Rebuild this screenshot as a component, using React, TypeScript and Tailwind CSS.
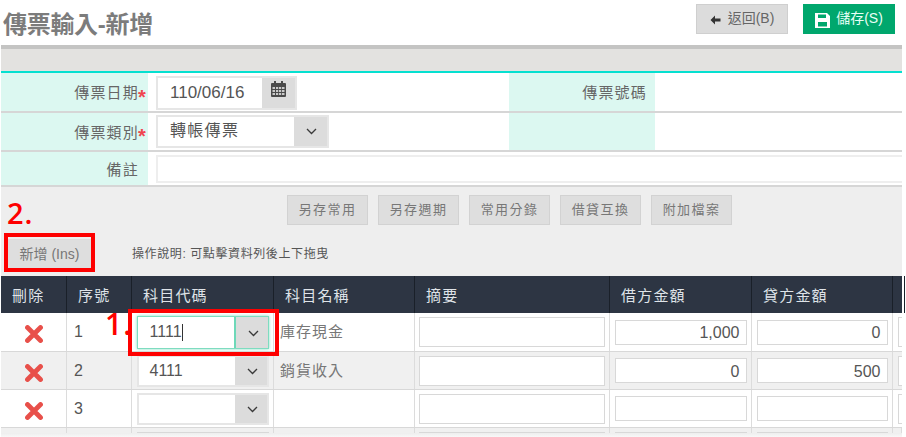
import React from "react";

const font = { fontFamily: '"Liberation Sans","Noto Sans CJK TC",sans-serif' };

function Chevron() {
  return (
    <svg width="11" height="7" viewBox="0 0 11 7" fill="none">
      <path d="M1 1l4.500 4.500L10 1" stroke="#3a3a3a" strokeWidth="1.300" />
    </svg>
  );
}

function Calendar() {
  return (
    <svg width="15" height="16" viewBox="0 0 15 16">
      <path d="M3 0h2v2h5V0h2v2h2a1 1 0 0 1 1 1v12a1 1 0 0 1-1 1H1a1 1 0 0 1-1-1V3a1 1 0 0 1 1-1h2z" fill="#4a4a4a" />
      <g fill="#c9c9c9">
        <rect x="1.500" y="6" width="2.500" height="2" />
        <rect x="5" y="6" width="2.200" height="2" />
        <rect x="8" y="6" width="2.200" height="2" />
        <rect x="11" y="6" width="2.500" height="2" />
        <rect x="1.500" y="9" width="2.500" height="2" />
        <rect x="5" y="9" width="2.200" height="2" />
        <rect x="8" y="9" width="2.200" height="2" />
        <rect x="11" y="9" width="2.500" height="2" />
        <rect x="1.500" y="12" width="2.500" height="2" />
        <rect x="5" y="12" width="2.200" height="2" />
        <rect x="8" y="12" width="2.200" height="2" />
        <rect x="11" y="12" width="2.500" height="2" />
      </g>
    </svg>
  );
}

function Cross() {
  return (
    <svg width="18" height="18" viewBox="0 0 18 18">
      <path d="M2.500 2.500l13 13M15.500 2.500l-13 13" stroke="#e8504a" strokeWidth="4.800" strokeLinecap="round" />
    </svg>
  );
}

function Label({ children, star }: { children: React.ReactNode; star?: boolean }) {
  return (
    <div className="w-[147px] shrink-0 bg-[#dcf8f1] flex items-center justify-end pt-[3px] text-[15px] tracking-[1.2px] text-[#666]">
      <span>{children}</span>
      <span className={star ? "w-[9px] text-[#f0454f] text-[20px] font-bold leading-none translate-y-[3px] -translate-x-[1px]" : "w-[9px]"}>{star ? "*" : ""}</span>
    </div>
  );
}

function ToolBtn({ children }: { children: React.ReactNode }) {
  return (
    <div className="w-[81px] h-[30px] bg-[#dedede] border border-[#d2d2d2] flex items-center justify-center text-[13px] tracking-[1.4px] text-[#777]">
      {children}
    </div>
  );
}

function Combo({ value, focused }: { value?: string; focused?: boolean }) {
  return (
    <div className={focused ? "flex h-[33px] w-[132px] border border-[#7fdcc0] shadow-[0_0_3px_#7fdcc0] bg-white" : "flex h-[32px] w-[132px] border-2 border-[#e6e6e6] bg-white"}>
      <div className={focused ? "flex-1 pl-[12px] flex items-center text-[16px] text-[#555] border-r-2 border-[#6ed8b8]" : "flex-1 pl-[11px] flex items-center text-[16px] text-[#555]"}>
        {value}
        {focused ? <span className="w-px h-[17px] bg-[#333]" /> : null}
      </div>
      <div className="w-[32px] bg-[#dcdcdc] flex items-center justify-center pl-[3px] pt-[2px]">
        <Chevron />
      </div>
    </div>
  );
}

function Amount({ value, w }: { value?: string; w: string }) {
  return (
    <div className={w + " h-[25px] border border-[#d8d8d8] bg-white flex items-center justify-end pr-[6px] pt-[2px] text-[16px] text-[#555]"}>
      {value}
    </div>
  );
}

const rowCols = "grid grid-cols-[66px_65px_142px_141px_195px_142px_141px_9px]";
const cell = "flex items-center border-r border-[#dcdcdc] min-w-0";

function Row({ n, code, name, d, c, alt, focused, h }: { n: string; code?: string; name?: string; d?: string; c?: string; alt?: boolean; focused?: boolean; h: string }) {
  return (
    <div className={rowCols + " " + h + " border-b border-[#d8d8d8] " + (alt ? "bg-[#f0f0f0]" : "bg-white")}>
      <div className={cell + " justify-center pt-[4px] border-[#cfcfcf]"}><Cross /></div>
      <div className={cell + " pl-[7px] text-[16px] text-[#555] border-[#cfcfcf]"}>{n}</div>
      <div className={cell + " justify-center"}><Combo value={code} focused={focused} /></div>
      <div className={cell + " pl-[6px] pt-[1px] text-[15px] tracking-[1px] text-[#777]"}>{name}</div>
      <div className={cell + " justify-center"}><div className="w-[186px] h-[30px] border border-[#d8d8d8] bg-white" /></div>
      <div className={cell + " justify-center"}><Amount value={d} w="w-[132px]" /></div>
      <div className={cell + " justify-center"}><Amount value={c} w="w-[131px]" /></div>
      <div className="flex items-center pl-[5px]"><div className="w-[4px] h-[30px] border border-[#d8d8d8] border-r-0 bg-white" /></div>
    </div>
  );
}

const heads = ["刪除", "序號", "科目代碼", "科目名稱", "摘要", "借方金額", "貸方金額", ""];
const lastCells = [0, 0, 132, 0, 186, 132, 131, 0];

export default function App() {
  return (
    <div className="relative w-[906px] h-[437px] overflow-hidden bg-white" style={font}>
      <div className="w-[901px] ml-[1px]">
        <div className="h-[45px] flex items-center justify-between pl-[2px] pr-[7px]">
          <div className="text-[24px] font-bold tracking-[-0.3px] text-[#7c7c7c] leading-none pt-[4px]">傳票輸入-新增</div>
          <div className="flex gap-[15px] pb-[8px]">
            <div className="w-[92px] h-[30px] bg-[#dcdcdc] border border-[#cfcfcf] flex items-center justify-center gap-[7px] text-[14px] text-[#666]">
              <svg width="11" height="10" viewBox="0 0 11 10" className="mt-[3px]"><path d="M5 0.500v3h5.500v3H5v3L0.500 5z" fill="#333" /></svg>
              <span>返回(B)</span>
            </div>
            <div className="w-[92px] h-[30px] bg-[#00a76d] flex items-center justify-center gap-[6px] text-[14px] text-[#e8fff6]">
              <svg width="15" height="15" viewBox="0 0 15 15" className="mt-[3px]"><path d="M0 0h12l3 3v12H0zM3 1.500v3.500h8V1.500zM3 9v4.500h9V9z" fill="#fff" fillRule="evenodd" /></svg>
              <span>儲存(S)</span>
            </div>
          </div>
        </div>
        <div className="h-[4px] bg-[#c4c4c3]" />
        <div className="h-[22px] bg-[#e3e2e0]" />
        <div className="h-[2px] bg-[#05e0d0]" />

        <div className="flex h-[40px] border-b-2 border-[#d6d6d6]">
          <Label star>傳票日期</Label>
          <div className="w-[361px] bg-white flex items-start pt-[3px] pl-[8px]">
            <div className="flex h-[34px] w-[141px] border-2 border-[#e6e6e6]">
              <div className="flex-1 pl-[12px] flex items-center text-[17px] text-[#555]">110/06/16</div>
              <div className="w-[33px] bg-[#dcdcdc] flex justify-center pt-[3px]"><Calendar /></div>
            </div>
          </div>
          <div className="w-[146px] bg-[#dcf8f1] flex items-center justify-end pt-[3px] pr-[8px] text-[15px] tracking-[1.2px] text-[#666]">傳票號碼</div>
          <div className="flex-1 bg-white" />
        </div>
        <div className="flex h-[39px] border-b-2 border-[#d6d6d6]">
          <Label star>傳票類別</Label>
          <div className="w-[361px] bg-white flex items-center pl-[8px]">
            <div className="flex h-[33px] w-[173px] border-2 border-[#e6e6e6]">
              <div className="flex-1 pl-[12px] flex items-center text-[16px] tracking-[1.300px] text-[#555] pb-[2px]">轉帳傳票</div>
              <div className="w-[33px] bg-[#dcdcdc] flex items-center justify-center pl-[2px]"><Chevron /></div>
            </div>
          </div>
          <div className="w-[146px] bg-[#dcf8f1]" />
          <div className="flex-1 bg-white" />
        </div>
        <div className="flex h-[35px] border-b-2 border-[#d6d6d6]">
          <Label>備註</Label>
          <div className="flex-1 bg-white flex items-center pl-[8px]">
            <div className="w-full h-[28px] border-2 border-r-0 border-[#eeeeee]" />
          </div>
        </div>

        <div className="h-[89px] bg-[#eeeeee] relative">
          <div className="flex gap-[10px] pl-[286px] pt-[8px]">
            <ToolBtn>另存常用</ToolBtn>
            <ToolBtn>另存週期</ToolBtn>
            <ToolBtn>常用分錄</ToolBtn>
            <ToolBtn>借貸互換</ToolBtn>
            <ToolBtn>附加檔案</ToolBtn>
          </div>
          <div className="flex items-center mt-[14px] h-[30px]">
            <div className="ml-[7px] w-[83px] h-[30px] bg-[#dedede] flex items-center justify-center text-[14px] text-[#777]">新增 (Ins)</div>
            <div className="ml-[41px] text-[12px] tracking-[0.600px] text-[#555]">操作說明: 可點擊資料列後上下拖曳</div>
          </div>
        </div>

        <div className={rowCols + " h-[37px] bg-[#2d3543]"}>
          {heads.map((h, i) => (
            <div key={i} className="flex items-center pl-[11px] pt-[3px] text-[15px] tracking-[1.2px] text-[#dfe3e8] border-r border-[#1a2029]">
              {h}
            </div>
          ))}
        </div>
        <Row h="h-[39px]" n="1" code="1111" name="庫存現金" d="1,000" c="0" focused />
        <Row h="h-[38px]" n="2" code="4111" name="銷貨收入" d="0" c="500" alt />
        <Row h="h-[38px]" n="3" />
        <div className={rowCols + " h-[5px] bg-[#f0f0f0] overflow-hidden"}>
          {lastCells.map((w, i) => (
            <div key={i} className="flex justify-center pt-[4px] border-r border-[#dcdcdc]">
              {w ? <div className="h-[4px] border-t border-[#d8d8d8] bg-white" style={{ width: w }} /> : null}
            </div>
          ))}
        </div>
        <div className="h-[5px] bg-gradient-to-b from-[#eeeeee] to-[#fafafa]" />
      </div>

      <div className="absolute left-[4px] top-[233px] w-[91px] h-[39px] border-[4px] border-[#fe0000]" />
      <div className="absolute left-[128px] top-[309px] w-[151px] h-[47px] border-[4px] border-[#fe0000]" />
      <div className="absolute left-[7px] top-[195px] text-[29px] font-semibold leading-[36px] text-[#fe0000] tracking-[1px]" style={{ fontFamily: '"Open Sans",sans-serif' }}>2.</div>
      <div className="absolute left-[105px] top-[306px] text-[30px] font-semibold leading-[36px] text-[#fe0000] tracking-[1px]" style={{ fontFamily: '"Open Sans",sans-serif' }}>1.</div>
    </div>
  );
}
